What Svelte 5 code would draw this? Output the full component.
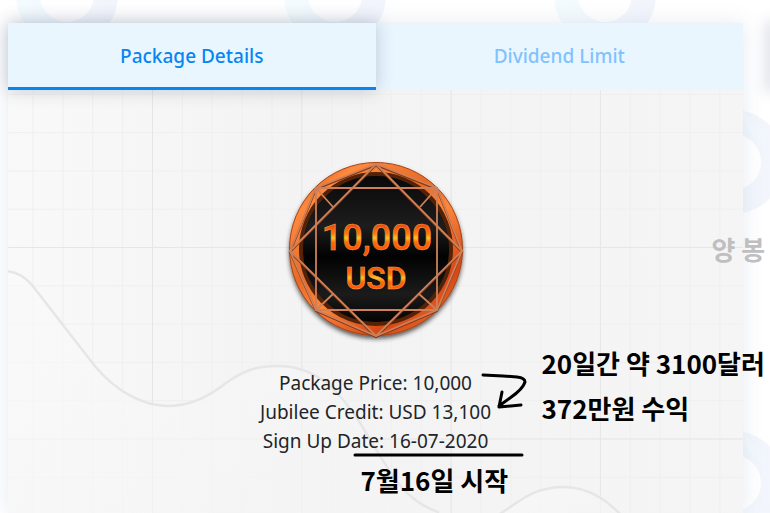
<script lang="ts">

    interface Tab {
        name: string,
        key: string,
    }

    const tabs: Tab[] = [
        { name: 'Package Details', key: 'details' },
        { name: 'Dividend Limit', key: 'limit' },
    ]

    const details = [
        { label: 'Package Price', value: '10,000' },
        { label: 'Jubilee Credit', value: 'USD 13,100' },
        { label: 'Sign Up Date', value: '16-07-2020' },
    ]

    let current = tabs[0]

    const setCurrent = (tab: Tab) => {
        current = tab
    }

</script>

<div class="page">
    <svg class="rings" aria-hidden="true">
        <defs>
            <linearGradient id="ring">
                <stop offset="0" stop-color="#f4fbfe" />
                <stop offset="1" stop-color="#f2f5fc" />
            </linearGradient>
        </defs>
        <g fill="none" stroke="url(#ring)" stroke-width="24">
            {#each [67, 335, 605] as x}
                <path d="M{x - 39} -9V-5A39 39 0 0 0 {x + 39} -5V-9" />
            {/each}
            <circle cx="733" cy="162" r="40" />
            <circle cx="733" cy="483" r="40" />
            <path d="M740 112Q752 130 774 147M740 433Q752 451 774 468" stroke-width="8" />
        </g>
    </svg>

    <main class="card">
        <div class="tabs" role="tablist">
            {#each tabs as tab (tab.key)}
                <button
                    class="tab"
                    role="tab"
                    aria-selected={tab.key === current.key}
                    class:active={tab.key === current.key}
                    on:click={() => setCurrent(tab)}
                >
                    {tab.name}
                </button>
            {/each}
        </div>

        <section class="panel">
            <svg class="chart" aria-hidden="true">
                <defs>
                    <linearGradient id="shade" x1="0" y1="0" x2="1" y2="0">
                        <stop offset="0" stop-color="#f9f9f9" />
                        <stop offset="0.4" stop-color="#f3f3f3" />
                        <stop offset="1" stop-color="#f5f5f5" />
                    </linearGradient>
                    <linearGradient id="hill" x1="0" y1="0" x2="0.8" y2="0.5">
                        <stop offset="0" stop-color="#fafafa" />
                        <stop offset="1" stop-color="#f5f5f5" />
                    </linearGradient>
                    <pattern id="minor" x="144" y="157" width="29.86" height="38.3" patternUnits="userSpaceOnUse">
                        <path d="M.5 0V39M0 .5H30" stroke="#efefef" />
                    </pattern>
                    <pattern id="major" x="144" y="157" width="149.3" height="191.5" patternUnits="userSpaceOnUse">
                        <path d="M.5 0V192M0 .5H150" stroke="#e6e6e6" />
                    </pattern>
                </defs>
                <rect width="100%" height="100%" fill="url(#shade)" />
                <rect width="100%" height="100%" fill="url(#minor)" />
                <rect width="100%" height="100%" fill="url(#major)" />
                <g fill="url(#hill)" fill-opacity="0.7" stroke="#e6e6e6" stroke-width="2.5">
                    <path d="M-2 181C10 182 18 188 24 195L86 275C108 302 136 316 160 316C184 316 203 305 218 293C235 281 248 276 269 276C311 276 333 304 352 333C382 381 393 409 430 422V425H-2Z" />
                    <path d="M487 427C512 412 524 397 556 397C584 397 603 414 618 430Z" />
                </g>
            </svg>

            <svg class="medal" viewBox="0 0 190 190" role="img" aria-label="10,000 USD">
                <defs>
                    <linearGradient id="rim" x1="0.1" y1="0" x2="0.9" y2="1">
                        <stop offset="0" stop-color="#c84b12" />
                        <stop offset="0.15" stop-color="#ff8a3d" />
                        <stop offset="0.4" stop-color="#e86a26" />
                        <stop offset="0.55" stop-color="#ff873b" />
                        <stop offset="0.8" stop-color="#d54816" />
                        <stop offset="1" stop-color="#ef7432" />
                    </linearGradient>
                    <linearGradient id="face" x1="0" y1="0" x2="0" y2="1">
                        <stop offset="0" stop-color="#080808" />
                        <stop offset="0.35" stop-color="#1d1d1d" />
                        <stop offset="0.55" stop-color="#020202" />
                        <stop offset="0.8" stop-color="#1b1b1b" />
                        <stop offset="1" stop-color="#030303" />
                    </linearGradient>
                    <linearGradient id="fire" x1="0" y1="0" x2="0" y2="1">
                        <stop offset="0.2" stop-color="#f04b0c" />
                        <stop offset="0.4" stop-color="#ff7a08" />
                        <stop offset="0.5" stop-color="#ffc526" />
                        <stop offset="0.6" stop-color="#ff6a08" />
                        <stop offset="0.8" stop-color="#ff5008" />
                    </linearGradient>
                    <filter id="drop" x="-10%" y="-10%" width="120%" height="120%">
                        <feDropShadow dx="0" dy="3" stdDeviation="2" flood-color="#222" flood-opacity="0.7" />
                    </filter>
                </defs>
                <circle cx="95" cy="94" r="86.5" fill="url(#rim)" stroke="#a74316" filter="url(#drop)" />
                <circle cx="95" cy="94" r="75" fill="url(#face)" stroke="#542207" stroke-width="4" />
                <g fill="none" stroke="#803817" stroke-width="2" transform="translate(0 1)">
                    <path d="M95 9L35 33L9 96L35 155L95 181L156 155L181 96L156 33Z" />
                    <path d="M95 9L181 96L95 181L9 96Z" />
                </g>
                <g fill="none" stroke="#cd8059" stroke-width="1.8">
                    <path d="M95 9L181 96L95 181L9 96Z" />
                    <path d="M35 33H156V155H35Z" />
                    <path d="M35 33L52 52M156 33L139 52M156 155L138 139M35 155L52 139" />
                    <path d="M95 9L35 33L9 96L35 155L95 181L156 155L181 96L156 33Z" />
                </g>
                <g class="amount" fill="url(#fire)" stroke="#f7a34b" stroke-width="0.5" text-anchor="middle">
                    <text x="96" y="95" font-size="36">10,000</text>
                    <text x="95" y="134" font-size="32">USD</text>
                </g>
            </svg>

            <ul class="details">
                {#each details as row}
                    <li>{row.label}: {row.value}</li>
                {/each}
            </ul>

            <svg class="pen" viewBox="0 0 175 92" aria-hidden="true">
                <path d="M131 10L151 11L165 12Q173 13 173 17Q171 24 158 33L147 41M150 27L147 42L169 40M3 90H170" />
            </svg>
            <p class="note profit">20일간 약 3100달러<br />372만원 수익</p>
            <p class="note start">7월16일 시작</p>
            <p class="note watermark">양 봉</p>
        </section>
    </main>

    <aside class="next"></aside>
</div>

<style>
:global(body) {
    margin: 0;
    background: #fff;
}

.page {
    position: relative;
    display: flex;
    min-height: 100vh;
    padding: 23px 0 0 8px;
    box-sizing: border-box;
    overflow: hidden;
    font-family: "Noto Sans", "Noto Sans CJK KR", sans-serif;
    color: #212529;
}

.rings {
    position: absolute;
    top: 0;
    left: 0;
    width: 100%;
    height: 100%;
}

.card {
    position: relative;
    flex: 1;
    display: flex;
    flex-direction: column;
    margin-right: 27px;
    box-shadow: 0 0 20px rgba(60, 80, 140, 0.12);
}

.next {
    width: 1px;
    height: 67px;
    margin-right: -1px;
    box-shadow: 0 0 14px 2px rgba(50, 60, 110, 0.35);
}

.tabs {
    display: flex;
    height: 67px;
    background: #eaf6fe;
}

.tab {
    flex: 1;
    border: 0;
    border-bottom: 3px solid transparent;
    padding: 2px 0 0;
    background: #eaf6fe;
    color: #80c2ff;
    font-family: "Noto Sans", sans-serif;
    font-size: 19px;
    font-weight: 500;
    cursor: pointer;
}

.tab.active {
    position: relative;
    z-index: 1;
    border-bottom-color: #0586f3;
    color: #0586f3;
    box-shadow: 0 0 16px rgba(40, 60, 90, 0.25);
}

.panel {
    position: relative;
    flex: 1;
    display: flex;
    flex-direction: column;
    align-items: center;
    padding-top: 65px;
}

.chart {
    position: absolute;
    top: 0;
    left: 0;
    width: 100%;
    height: 100%;
}

.medal {
    position: relative;
    width: 190px;
    height: 190px;
}

.amount {
    font-family: Roboto, sans-serif;
    font-weight: 500;
}

.details {
    position: relative;
    margin: 0;
    padding: 24px 0 0;
    list-style: none;
    font-size: 19px;
    line-height: 29px;
    text-align: center;
}

.pen {
    position: absolute;
    top: 275px;
    left: calc(50% - 24px);
    width: 175px;
    height: 92px;
    fill: none;
    stroke: #000;
    stroke-width: 3;
    stroke-linecap: round;
    stroke-linejoin: round;
}

.note {
    position: absolute;
    margin: 0;
    color: #000;
    font-family: "Noto Sans CJK KR", sans-serif;
    font-size: 26px;
    font-weight: 700;
    line-height: 45px;
    white-space: nowrap;
}

.profit {
    top: 250px;
    left: calc(50% + 166px);
}

.start {
    top: 367px;
    left: calc(50% - 15px);
}

.watermark {
    top: 136px;
    left: calc(50% + 336px);
    color: #bfbfbf;
}
</style>
